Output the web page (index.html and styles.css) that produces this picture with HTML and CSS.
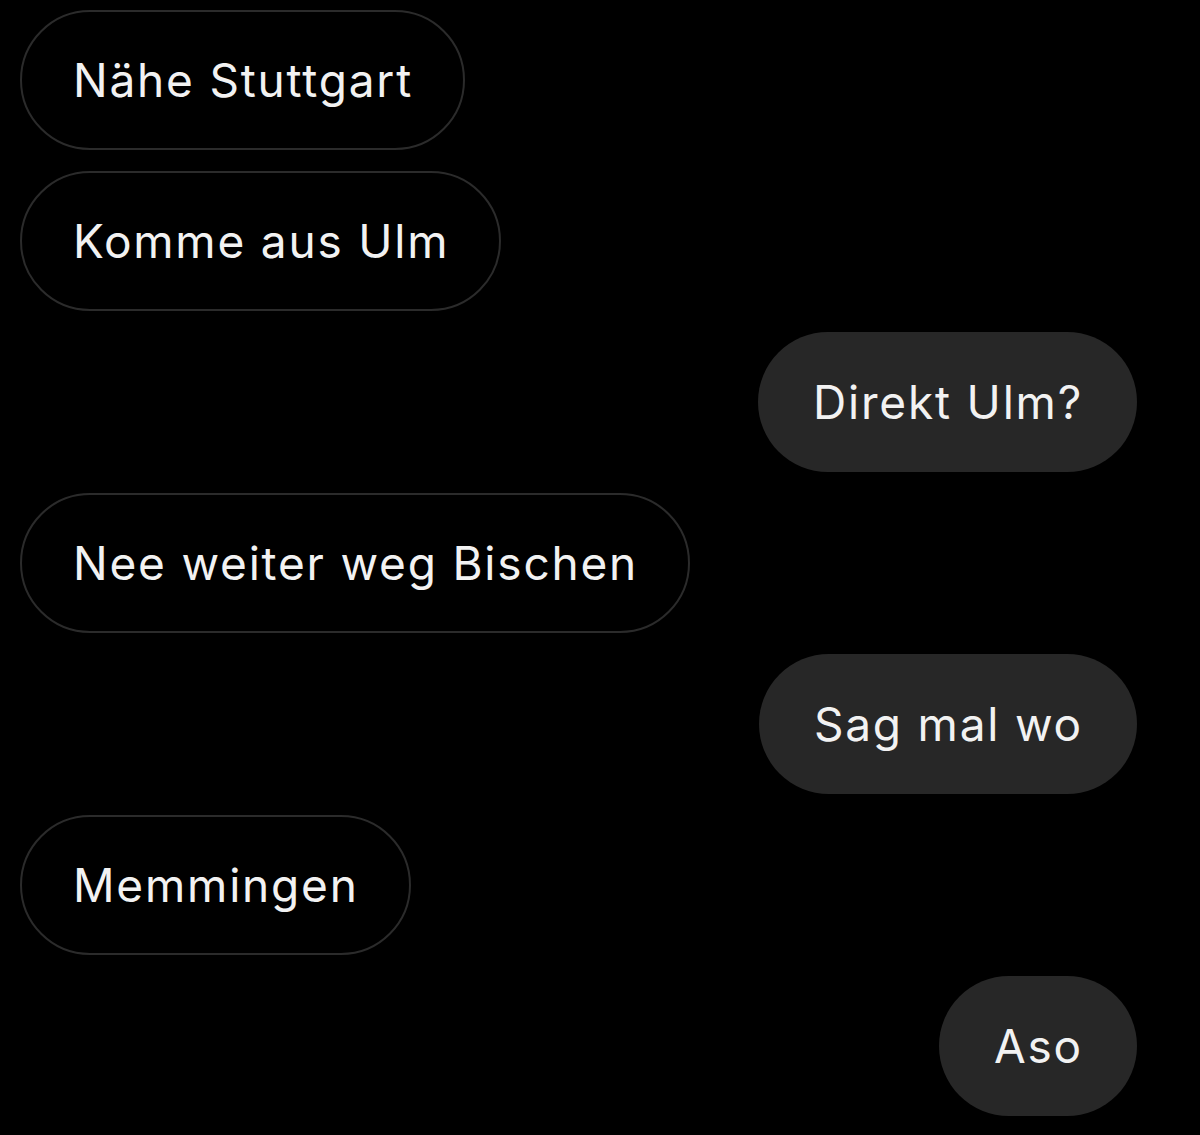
FILE: index.html
```html
<!DOCTYPE html>
<html lang="de">
<head>
  <meta charset="UTF-8">
  <meta name="viewport" content="width=device-width, initial-scale=1.0">
  <title>Chat</title>
  <link rel="stylesheet" href="styles.css">
</head>
<body>

<div class="chat">
  <div class="msg theirs">Nähe Stuttgart</div>
  <div class="msg theirs">Komme aus Ulm</div>
  <div class="msg mine">Direkt Ulm?</div>
  <div class="msg theirs">Nee weiter weg Bischen</div>
  <div class="msg mine">Sag mal wo</div>
  <div class="msg theirs">Memmingen</div>
  <div class="msg mine">Aso</div>
</div>

</body>
</html>
```

FILE: styles.css
```css
body {
  margin: 0;
  background-color: #000000;
  font-family: Inter, "Noto Sans", sans-serif;
  color: #f2f2f2;
  min-height: 100vh;
  overflow: hidden;
}

.chat {
  display: flex;
  flex-direction: column;
  gap: 21px;
  padding: 10px 63px 0 20px;
}

.msg {
  box-sizing: border-box;
  height: 140px;
  border-radius: 70px;
  display: flex;
  align-items: center;
  font-size: 46px;
  letter-spacing: 1.8px;
  white-space: nowrap;
}

.theirs {
  align-self: flex-start;
  border: 2px solid #2b2b2b;
  padding: 0 50px 0 51px;
}

.mine {
  align-self: flex-end;
  background-color: #272727;
  padding: 0 54px 0 55px;
}
```
